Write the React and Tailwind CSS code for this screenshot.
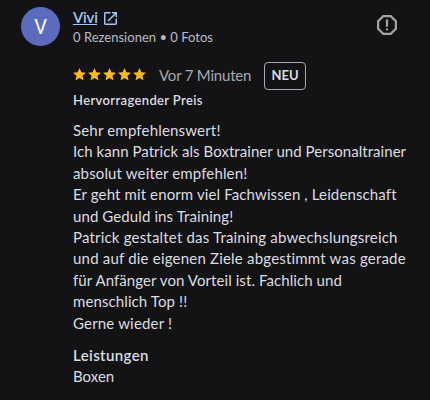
const lines = [
  { text: 'Sehr empfehlenswert!', spacing: 'tracking-[0.18px]' },
  { text: 'Ich kann Patrick als Boxtrainer und Personaltrainer', spacing: 'tracking-[0.05px]' },
  { text: 'absolut weiter empfehlen!', spacing: 'tracking-[0.14px]' },
  { text: 'Er geht mit enorm viel Fachwissen , Leidenschaft', spacing: 'tracking-[0.12px]' },
  { text: 'und Geduld ins Training!', spacing: 'tracking-[0.1px]' },
  { text: 'Patrick gestaltet das Training abwechslungsreich', spacing: 'tracking-[0.19px]' },
  { text: 'und auf die eigenen Ziele abgestimmt was gerade', spacing: 'tracking-[0.2px]' },
  { text: 'für Anfänger von Vorteil ist. Fachlich und', spacing: 'tracking-[0.08px]' },
  { text: 'menschlich Top !!', spacing: 'tracking-[0.1px]' },
  { text: 'Gerne wieder !', spacing: 'tracking-[0.18px]' },
];

function Star() {
  return (
    <svg viewBox="2 2 20 19" className="h-[12.4px] w-[13px]" fill="#fbbc1a">
      <path d="M12 17.27 18.18 21l-1.64-7.03L22 9.24l-7.19-.61L12 2 9.19 8.63 2 9.24l5.46 4.73L5.82 21z" />
    </svg>
  );
}

function OpenIcon() {
  return (
    <svg viewBox="3 3 18 18" className="mt-[12px] ml-[7px] h-[13px] w-[13px]" fill="#a5c5f3">
      <path d="M19 19H5V5h7V3H5a2 2 0 0 0-2 2v14a2 2 0 0 0 2 2h14c1.1 0 2-.9 2-2v-7h-2v7zM14 3v2h3.59l-9.83 9.83 1.41 1.41L19 6.41V10h2V3h-7z" />
    </svg>
  );
}

function ReportIcon() {
  return (
    <svg viewBox="3 3 18 18" className="mt-[15px] mr-[33px] h-[20px] w-[20px]" fill="#a3a4a6">
      <path d="M15.73 3H8.27L3 8.27v7.46L8.27 21h7.46L21 15.73V8.27L15.73 3zM19 14.9 14.9 19H9.1L5 14.9V9.1L9.1 5h5.8L19 9.1v5.8z" />
      <circle cx="12" cy="16" r="1" />
      <path d="M11 7h2v6.5h-2z" />
    </svg>
  );
}

export default function App() {
  return (
    <div className="flex h-[400px] w-[430px] flex-col overflow-hidden bg-[#131315] font-[Lato,sans-serif] whitespace-nowrap text-[#dcdde0]">
      <header className="flex h-[60px]">
        <div className="mt-[7px] ml-[21px] flex h-[39px] w-[39px] shrink-0 items-center justify-center rounded-full bg-[#5c6bc0] font-[Roboto,sans-serif] text-[20px] text-white">
          V
        </div>
        <div className="ml-[13px] flex-1">
          <div className="flex h-[27px]">
            <span className="mt-[8px] h-[17px] w-[24px] border-b border-[#a5c5f3] text-[15px] leading-[19px] font-semibold tracking-[-0.2px] text-[#a5c5f3]">Vivi</span>
            <OpenIcon />
          </div>
          <div className="text-[13px] leading-[20px] tracking-[0.02px] text-[#bbbcc0]">0 Rezensionen • 0 Fotos</div>
        </div>
        <ReportIcon />
      </header>
      <main className="pl-[73px]">
        <div className="flex h-[31px] items-center">
          <div className="mb-[3px] flex gap-[2px]">
            <Star /><Star /><Star /><Star /><Star />
          </div>
          <span className="ml-[13px] w-[93px] text-[15px] tracking-[-0.2px] text-[#a9aaad]">Vor 7 Minuten</span>
          <span className="ml-[12px] flex h-[28px] w-[42px] items-center justify-center rounded-[4px] border border-[#aaabae] text-[13px] font-bold">NEU</span>
        </div>
        <div className="h-[29px] text-[13px] leading-[19px] font-semibold tracking-[0.36px]">Hervorragender Preis</div>
        <div>
          {lines.map((line) => (
            <p key={line.text} className={`h-[21.4px] text-[15px] leading-[21.4px] ${line.spacing}`}>{line.text}</p>
          ))}
        </div>
        <div className="mt-[11px] text-[15px] leading-[21px] font-semibold tracking-[0.4px]">Leistungen</div>
        <div className="text-[15px] leading-[21px]">Boxen</div>
      </main>
    </div>
  );
}
